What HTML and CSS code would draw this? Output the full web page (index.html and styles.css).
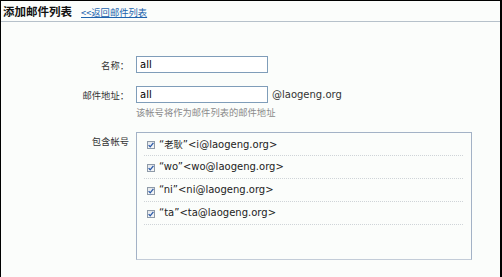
FILE: index.html
```html
<!DOCTYPE html>
<html lang="zh-CN">
<head>
<meta charset="utf-8">
<title>添加邮件列表</title>
<link rel="stylesheet" href="styles.css">
</head>
<body>
<div class="page">
  <div class="header">
    <h1 class="title">添加邮件列表</h1>
    <a class="back" href="#">&lt;&lt;返回邮件列表</a>
  </div>
  <form class="form">
    <div class="field field-name">
      <label class="label">名称：</label>
      <input class="text" type="text" value="all">
    </div>
    <div class="field field-addr">
      <label class="label">邮件地址：</label>
      <input class="text" type="text" value="all">
      <span class="suffix">@laogeng.org</span>
    </div>
    <div class="hint">该帐号将作为邮件列表的邮件地址</div>
    <div class="field field-members">
      <label class="label label-top">包含帐号</label>
      <div class="members">
        <div class="member"><span class="check"><svg viewBox="0 0 8 8" width="8" height="8"><path d="M1.6 4.1 L3.2 5.8 L6.4 1.8" fill="none" stroke="#2b5aa8" stroke-width="1.3"/></svg></span><span class="addr">“<span class="cjk">老耿</span>”&lt;i@laogeng.org&gt;</span></div>
        <div class="member"><span class="check"><svg viewBox="0 0 8 8" width="8" height="8"><path d="M1.6 4.1 L3.2 5.8 L6.4 1.8" fill="none" stroke="#2b5aa8" stroke-width="1.3"/></svg></span><span class="addr">“wo”&lt;wo@laogeng.org&gt;</span></div>
        <div class="member"><span class="check"><svg viewBox="0 0 8 8" width="8" height="8"><path d="M1.6 4.1 L3.2 5.8 L6.4 1.8" fill="none" stroke="#2b5aa8" stroke-width="1.3"/></svg></span><span class="addr">“ni”&lt;ni@laogeng.org&gt;</span></div>
        <div class="member"><span class="check"><svg viewBox="0 0 8 8" width="8" height="8"><path d="M1.6 4.1 L3.2 5.8 L6.4 1.8" fill="none" stroke="#2b5aa8" stroke-width="1.3"/></svg></span><span class="addr">“ta”&lt;ta@laogeng.org&gt;</span></div>
      </div>
    </div>
  </form>
</div>
</body>
</html>
```
FILE: styles.css
```css
html, body {
  margin: 0;
  padding: 0;
  background: #fbfdfb;
}
body {
  font-family: "DejaVu Sans", "Noto Sans CJK SC", sans-serif;
  font-size: 10px;
  color: #222;
}
.page {
  box-sizing: border-box;
  height: 277px;
  border-top: 1px solid #000;
  border-left: 1px solid #000;
  border-right: 2px solid #000;
  background: #fbfdfb;
}
.header {
  display: flex;
  align-items: center;
  height: 20px;
  padding-left: 2px;
  border-bottom: 1px solid #b6c1ca;
}
.title {
  margin: 0;
  font-family: "Noto Sans CJK SC", sans-serif;
  font-size: 11.5px;
  font-weight: bold;
  color: #111;
  line-height: 14px;
}
.back {
  margin-left: 9px;
  font-family: "Noto Sans CJK SC", sans-serif;
  font-size: 9.3px;
  color: #2063ad;
  text-decoration: underline;
  line-height: 12px;
  margin-top: 1px;
}
.form {
  margin: 0;
  padding-top: 34px;
}
.field {
  display: flex;
  align-items: center;
}
.label {
  width: 128px;
  margin-right: 7px;
  text-align: right;
  font-family: "Noto Sans CJK SC", sans-serif;
  font-size: 9.3px;
  color: #333;
  line-height: 12px;
}
.text {
  box-sizing: border-box;
  width: 132px;
  height: 17px;
  margin: 0;
  padding: 0 3px;
  border: 1px solid #7f9db9;
  background: #fff;
  font-family: "DejaVu Sans", sans-serif;
  font-size: 10px;
  color: #000;
  outline: none;
}
.field-addr {
  margin-top: 13px;
}
.suffix {
  margin-left: 4px;
  color: #333;
}
.hint {
  margin-left: 135px;
  margin-top: 3px;
  font-family: "Noto Sans CJK SC", sans-serif;
  font-size: 9.3px;
  line-height: 12px;
  color: #8a8a8a;
}
.field-members {
  align-items: flex-start;
  margin-top: 14px;
}
.label-top {
  padding-top: 3px;
}
.members {
  box-sizing: border-box;
  width: 336px;
  height: 128px;
  border: 1px solid #a3b2c6;
  border-bottom-color: #c3ccd8;
  background: #fbfdfb;
}
.member {
  display: flex;
  align-items: center;
  height: 22px;
  margin: 0 8px 0 7px;
  padding-left: 3px;
  border-bottom: 1px dotted #cfd4d8;
  color: #222;
}
.check {
  box-sizing: border-box;
  width: 8px;
  height: 8px;
  margin-top: 2px;
  margin-right: 4px;
  border: 1px solid #8e9aa8;
  background: linear-gradient(#e4e8ec, #f6f7f8);
  display: flex;
}
.check svg {
  margin: -1px;
}
.addr {
  line-height: 12px;
}
.cjk {
  font-family: "Noto Sans CJK SC", sans-serif;
  font-size: 9.3px;
}
```
